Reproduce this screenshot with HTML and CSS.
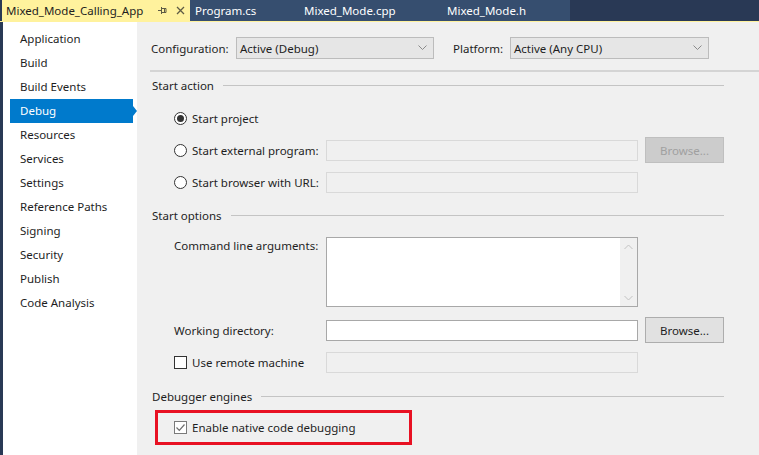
FILE: index.html
```html
<!DOCTYPE html>
<html>
<head>
<meta charset="utf-8">
<title>Mixed_Mode_Calling_App</title>
<link rel="stylesheet" href="styles.css">
</head>
<body>
<div class="app">
  <div class="tabbar">
    <div class="tab-active">
      <span class="tab-title">Mixed_Mode_Calling_App</span>
      <svg class="pin" width="9" height="9" viewBox="0 0 9 9"><path d="M0 4.5H3M3.5 1V8M3.5 2.5H8V6.5H3.5M6.5 2.5V6.5" fill="none" stroke="#5f5c45" stroke-width="1"/></svg>
      <svg class="close" width="9" height="9" viewBox="0 0 9 9"><path d="M1 1L8 8M8 1L1 8" fill="none" stroke="#5f5c45" stroke-width="1.3"/></svg>
    </div>
    <div class="tabs-inactive">
      <div class="tab tab-1">Program.cs</div>
      <div class="tab tab-2">Mixed_Mode.cpp</div>
      <div class="tab tab-3">Mixed_Mode.h</div>
    </div>
  </div>
  <div class="tabline"></div>
  <div class="body">
    <div class="edge"></div>
    <nav class="sidebar">
      <div class="nav-item">Application</div>
      <div class="nav-item">Build</div>
      <div class="nav-item">Build Events</div>
      <div class="nav-item selected">Debug</div>
      <div class="nav-item">Resources</div>
      <div class="nav-item">Services</div>
      <div class="nav-item">Settings</div>
      <div class="nav-item">Reference Paths</div>
      <div class="nav-item">Signing</div>
      <div class="nav-item">Security</div>
      <div class="nav-item">Publish</div>
      <div class="nav-item">Code Analysis</div>
    </nav>
    <main class="main">
      <div class="config-row">
        <span class="cfg-label">Configuration:</span>
        <div class="select select-config"><span>Active (Debug)</span>
          <svg width="9" height="6" viewBox="0 0 9 6"><path d="M0.5 0.5L4.5 4.5L8.5 0.5" fill="none" stroke="#8a8a8a" stroke-width="1"/></svg>
        </div>
        <span class="plat-label">Platform:</span>
        <div class="select select-platform"><span>Active (Any CPU)</span>
          <svg width="9" height="6" viewBox="0 0 9 6"><path d="M0.5 0.5L4.5 4.5L8.5 0.5" fill="none" stroke="#8a8a8a" stroke-width="1"/></svg>
        </div>
      </div>
      <div class="separator"></div>

      <div class="section-head head-action"><span>Start action</span><div class="rule"></div></div>
      <div class="form-row radio-row">
        <label class="choice"><span class="radio checked"></span>Start project</label>
      </div>
      <div class="form-row radio-row">
        <label class="choice"><span class="radio"></span>Start external program:</label>
        <div class="input disabled"></div>
        <div class="button disabled">Browse...</div>
      </div>
      <div class="form-row radio-row">
        <label class="choice"><span class="radio"></span>Start browser with URL:</label>
        <div class="input disabled"></div>
      </div>

      <div class="section-head head-options"><span>Start options</span><div class="rule"></div></div>
      <div class="form-row cmd-row">
        <span class="field-label top">Command line arguments:</span>
        <div class="textarea">
          <div class="scrollbar">
            <svg width="9" height="6" viewBox="0 0 9 6"><path d="M0.5 5L4.5 1L8.5 5" fill="none" stroke="#c2c2c2" stroke-width="1"/></svg>
            <svg width="9" height="6" viewBox="0 0 9 6"><path d="M0.5 1L4.5 5L8.5 1" fill="none" stroke="#c2c2c2" stroke-width="1"/></svg>
          </div>
        </div>
      </div>
      <div class="form-row dir-row">
        <span class="field-label">Working directory:</span>
        <div class="input enabled"></div>
        <div class="button">Browse...</div>
      </div>
      <div class="form-row remote-row">
        <label class="choice"><span class="checkbox"></span>Use remote machine</label>
        <div class="input disabled"></div>
      </div>

      <div class="section-head head-engines"><span>Debugger engines</span><div class="rule"></div></div>
      <div class="highlight">
        <label class="choice"><span class="checkbox checked">
          <svg width="11" height="11" viewBox="0 0 11 11"><path d="M1.5 5.5L4.3 8.3L9.5 2.5" fill="none" stroke="#6e6e6e" stroke-width="1.2"/></svg>
        </span>Enable native code debugging</label>
      </div>
    </main>
  </div>
</div>
</body>
</html>
```

FILE: styles.css
```css
* { box-sizing: border-box; }
html, body { margin: 0; padding: 0; }
body {
  width: 759px;
  height: 455px;
  overflow: hidden;
  font-family: "Noto Sans", "Open Sans", sans-serif;
  font-size: 11.5px;
  color: #1e1e1e;
  background: #f0f0f0;
}
.app { width: 759px; height: 455px; display: flex; flex-direction: column; }

/* Tabs */
.tabbar {
  height: 21px;
  display: flex;
  background: #293955;
  padding-left: 2px;
}
.tab-active {
  width: 188px;
  flex-shrink: 0;
  background: #fff29d;
  display: flex;
  align-items: center;
  padding-left: 4px;
  color: #1e1e1e;
}
.tab-title { width: 151px; white-space: nowrap; }
.pin { margin-left: 1px; }
.close { margin-left: 9px; }
.tabs-inactive {
  display: flex;
  width: 380px;
  flex-shrink: 0;
  background: #364e6f;
}
.tab {
  color: #ffffff;
  display: flex;
  align-items: center;
  padding-left: 5px;
  white-space: nowrap;
}
.tab-1 { width: 109px; }
.tab-2 { width: 143px; }
.tab-3 { width: 128px; }
.tabline { height: 1px; background: #fff29d; }

/* Body */
.body { flex: 1; display: flex; min-height: 0; }
.edge { width: 3px; flex-shrink: 0; background: #293955; }
.sidebar {
  width: 134px;
  flex-shrink: 0;
  background: #ffffff;
  padding-top: 5px;
}
.nav-item {
  height: 24px;
  line-height: 24px;
  padding-left: 17px;
  white-space: nowrap;
}
.nav-item.selected {
  position: relative;
  margin-left: 7px;
  margin-right: 4px;
  padding-left: 10px;
  background: #007acc;
  color: #ffffff;
}
.nav-item.selected::after {
  content: "";
  position: absolute;
  right: -4px;
  top: 7px;
  border-top: 5px solid transparent;
  border-bottom: 5px solid transparent;
  border-left: 4px solid #007acc;
}

.main {
  flex: 1;
  min-width: 0;
  padding: 15px 35px 0 14px;
  background: #f0f0f0;
}

/* Config row */
.config-row { display: flex; align-items: center; height: 22px; }
.cfg-label { width: 85px; flex-shrink: 0; white-space: nowrap; }
.plat-label { width: 57px; flex-shrink: 0; margin-left: 19px; white-space: nowrap; }
.select {
  height: 22px;
  flex-shrink: 0;
  background: #e6e6e6;
  border: 1px solid #bcbcbc;
  display: flex;
  align-items: center;
  justify-content: space-between;
  padding: 0 6px 0 3px;
}
.select-config { width: 198px; }
.select-platform { width: 199px; }

.separator {
  margin: 11px -35px 0 -1px;
  height: 2px;
  background: #d4d4d4;
}

/* Section heads */
.section-head {
  display: flex;
  align-items: center;
  height: 16px;
  margin-left: 1px;
  gap: 9px;
  white-space: nowrap;
}
.section-head .rule { flex: 1; height: 1px; background: #c4c4c4; }
.head-action { margin-top: 5px; }
.head-options { margin-top: 9px; }
.head-engines { margin-top: 15px; }

/* Form rows */
.form-row {
  display: grid;
  grid-template-columns: 152px 312px 86px;
  align-items: center;
  padding-left: 23px;
}
.radio-row { height: 32px; }
.head-action + .radio-row { margin-top: 9px; }
.cmd-row { margin-top: 14px; align-items: start; }
.dir-row { margin-top: 10px; height: 26px; }
.remote-row { margin-top: 8px; height: 22px; }

.choice { display: flex; align-items: center; gap: 5px; white-space: nowrap; }
.field-label { white-space: nowrap; }
.field-label.top { padding-top: 1px; }

.radio {
  width: 13px; height: 13px;
  border: 1px solid #333333;
  border-radius: 50%;
  background: #ffffff;
  display: flex; align-items: center; justify-content: center;
}
.radio.checked::after {
  content: "";
  width: 7px; height: 7px;
  border-radius: 50%;
  background: #333333;
}
.checkbox {
  width: 13px; height: 13px;
  border: 1px solid #333333;
  background: #ffffff;
  display: flex; align-items: center; justify-content: center;
}
.checkbox.checked { border-color: #7a7a7a; }

.input { height: 21px; border: 1px solid #d9d9d9; background: #f0f0f0; }
.input.enabled { border-color: #a8a8a8; background: #ffffff; }

.textarea {
  height: 70px;
  border: 1px solid #a8a8a8;
  background: #ffffff;
  display: flex;
  justify-content: flex-end;
}
.scrollbar {
  width: 17px;
  background: #f0f0f0;
  display: flex;
  flex-direction: column;
  justify-content: space-between;
  align-items: center;
  padding: 6px 0 5px;
}

.button {
  height: 26px;
  margin-left: 7px;
  border: 1px solid #adadad;
  background: #e1e1e1;
  display: flex; align-items: center; justify-content: center;
  color: #1e1e1e;
}
.button.disabled {
  border-color: #bfbfbf;
  background: #cccccc;
  color: #a0a0a0;
}

.highlight {
  margin: 6px 0 0 4px;
  width: 257px;
  height: 35px;
  border: 3px solid #e81123;
  display: flex;
  align-items: center;
  padding-left: 16px;
}
```
